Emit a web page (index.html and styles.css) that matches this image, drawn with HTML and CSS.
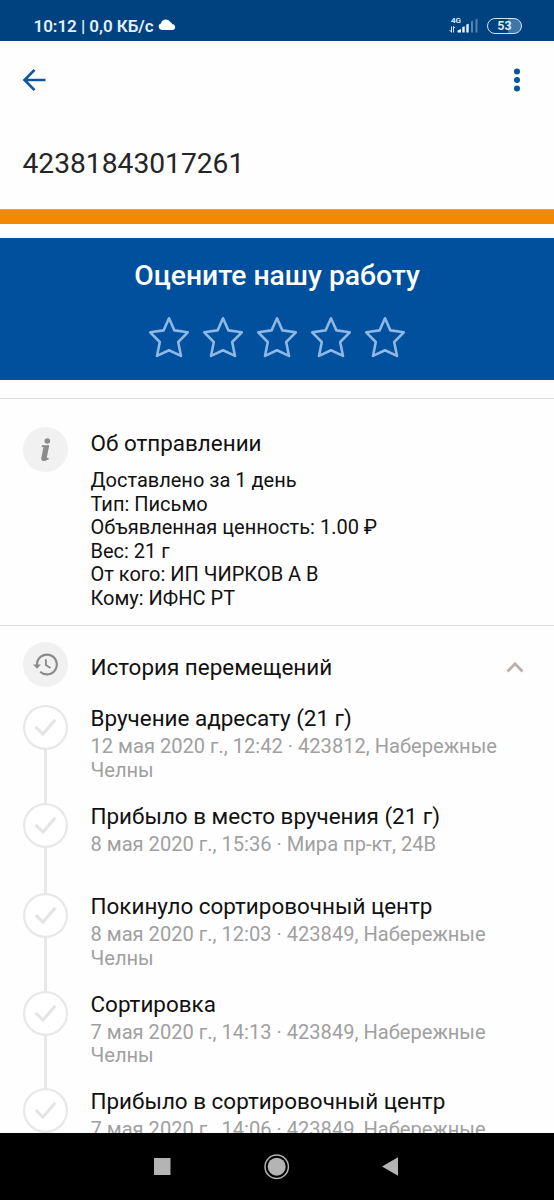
FILE: index.html
```html
<!DOCTYPE html>
<html lang="ru">
<head>
<meta charset="utf-8">
<title>42381843017261</title>
<link rel="stylesheet" href="styles.css">
</head>
<body>
<svg class="defs" width="0" height="0">
  <symbol id="star" viewBox="0 0 42 42"><path d="M21 2.300 26.400 14.400 39.800 16.300 30.200 26 33 39.900 21 34.300 9 39.900 11.800 26 2.200 16.300 15.600 14.400Z" fill="none" stroke="#8db7e4" stroke-width="2.600" stroke-linejoin="round"/></symbol>
  <symbol id="check" viewBox="0 0 45 45"><circle cx="22.5" cy="22.5" r="21.4" fill="#fff" stroke="#e8e8e8" stroke-width="2.2"/><path d="M12.500 21.800 20 29 32.300 14.800" fill="none" stroke="#e4e4e4" stroke-width="3"/></symbol>
</svg>
<div class="screen">
  <header class="status">
    <span class="status-text">10:12 | 0,0 КБ/с</span>
    <svg class="cloud" width="18" height="12" viewBox="0 0 18 12"><path d="M3.700 11A3.400 3.400 0 0 1 3 4.400 5 5 0 0 1 12.300 3.100 4 4 0 0 1 14.200 5.100 3 3 0 0 1 14.900 11Z" fill="#fff"/></svg>
    <div class="network">
      <span class="net-type">4G</span>
      <svg width="30" height="17" viewBox="0 0 30 17"><g fill="none" stroke="#d5e4f4" stroke-width="1"><path d="M2.500 9.500v6M.5 13l2 2M4.500 15.500V9.500l1.500 1.500"/></g><g fill="#e8f2fc"><path d="M8.500 15.500v-2l3.500-1.500v3.500zM13.300 15.500V10l2.400-.8v6.300zM17.300 15.500V7.500l2.400-.8v8.800z"/></g><path d="M22 15.500V4.500l2-1v12zM26.500 15.500V2.500l2-1v14z" fill="#5283b2"/></svg>
    </div>
    <span class="battery">53</span>
  </header>

  <nav class="appbar">
    <svg width="24" height="24" viewBox="0 0 24 24"><path d="M12.500 1.800 2.500 12 12.500 22.200M2.500 12H23.500" fill="none" stroke="#0c559e" stroke-width="2.600"/></svg>
    <svg width="8" height="24" viewBox="0 0 8 24" fill="#07549f"><circle cx="4" cy="3.500" r="3"/><circle cx="4" cy="12" r="3"/><circle cx="4" cy="20.500" r="3"/></svg>
  </nav>
  <h1 class="number">42381843017261</h1>
  <div class="stripe"></div>

  <section class="rate">
    <h2 class="rate-title">Оцените нашу работу</h2>
    <div class="stars">
      <svg><use href="#star"/></svg><svg><use href="#star"/></svg><svg><use href="#star"/></svg><svg><use href="#star"/></svg><svg><use href="#star"/></svg>
    </div>
  </section>

  <section class="about">
    <svg class="badge" viewBox="0 0 45 45"><circle cx="22.500" cy="22.500" r="22.500" fill="#f1f1f1"/><circle cx="24.300" cy="14" r="2.800" fill="#8c8c8c"/><path d="M18.800 18.300H26.300L23.900 30Q23.700 31.600 25.800 30.800L25.500 32.400Q17.600 36.200 18.300 30.800L20.500 20.300 18.500 20Z" fill="#8c8c8c"/></svg>
    <div>
      <h3 class="title">Об отправлении</h3>
      <p class="details">Доставлено за 1 день<br>Тип: Письмо<br>Объявленная ценность: 1.00 ₽<br>Вес: 21 г<br>От кого: ИП ЧИРКОВ А В<br>Кому: ИФНС РТ</p>
    </div>
  </section>

  <section class="history">
    <div class="history-head">
      <svg class="badge" viewBox="0 0 45 45"><circle cx="22.500" cy="22.500" r="22.500" fill="#f1f1f1"/><path d="M14 23.500V22.500A9.900 9.900 0 1 1 17.200 29.800" fill="none" stroke="#8b8b8b" stroke-width="2.200"/><path d="M10 22.500H18L14 26.700Z" fill="#8b8b8b"/><path d="M22.900 17.300V23L27.600 26" fill="none" stroke="#8b8b8b" stroke-width="1.900"/></svg>
      <h3 class="title">История перемещений</h3>
      <svg class="chevron" width="18" height="12" viewBox="0 0 18 12"><path d="M1.500 10.500 9 2.800 16.500 10.500" fill="none" stroke="#b9b1a8" stroke-width="2.800"/></svg>
    </div>
    <ol class="events">
      <li class="event"><svg class="mark"><use href="#check"/></svg><div><h3 class="title">Вручение адресату (21 г)</h3><p class="meta">12 мая 2020 г., 12:42 · 423812, Набережные<br>Челны</p></div></li>
      <li class="event short"><svg class="mark"><use href="#check"/></svg><div><h3 class="title">Прибыло в место вручения (21 г)</h3><p class="meta">8 мая 2020 г., 15:36 · Мира пр-кт, 24В</p></div></li>
      <li class="event"><svg class="mark"><use href="#check"/></svg><div><h3 class="title">Покинуло сортировочный центр</h3><p class="meta">8 мая 2020 г., 12:03 · 423849, Набережные<br>Челны</p></div></li>
      <li class="event"><svg class="mark"><use href="#check"/></svg><div><h3 class="title">Сортировка</h3><p class="meta">7 мая 2020 г., 14:13 · 423849, Набережные<br>Челны</p></div></li>
      <li class="event"><svg class="mark"><use href="#check"/></svg><div><h3 class="title">Прибыло в сортировочный центр</h3><p class="meta">7 мая 2020 г., 14:06 · 423849, Набережные</p></div></li>
    </ol>
  </section>

  <footer class="navbar">
    <svg width="554" height="67" viewBox="0 0 554 67" fill="#b4b4b4"><path d="M154 25h16.500v17H154z"/><circle cx="276.700" cy="33.700" r="9"/><circle cx="276.700" cy="33.700" r="11.700" fill="none" stroke="#b4b4b4" stroke-width="1.500"/><path d="M398 24.300v18.400L382 33.500z"/></svg>
  </footer>
</div>
</body>
</html>
```
FILE: styles.css
```css
* { box-sizing: border-box; margin: 0; padding: 0; }
body { background: #fefefe; font-family: Roboto, "Noto Sans", sans-serif; color: #111; }
svg { display: block; flex: none; }
h1, h2, h3 { font-weight: 400; }
.defs { position: absolute; }
.screen { width: 554px; height: 1200px; overflow: hidden; display: flex; flex-direction: column; }
.screen > * { flex: none; }

.status { height: 41px; background: #00427f; color: #e2effb; display: flex; align-items: center; padding: 10px 32px 0 33.5px; }
.status-text { font-size: 17px; line-height: 20px; font-weight: 600; letter-spacing: -0.05px; white-space: nowrap; }
.cloud { margin: -2px 0 0 4px; }
.network { margin-left: auto; position: relative; }
.net-type { position: absolute; left: 2px; top: -1px; font-size: 8px; line-height: 9px; font-weight: 600; }
.battery { width: 35px; height: 16px; margin-left: 8px; border: 1.5px solid #cfe3f6; border-radius: 8px; background: linear-gradient(90deg, #00427f 62%, #3f76aa 62%); font-size: 12.5px; line-height: 14px; font-weight: 600; text-align: center; }

.appbar { height: 79px; display: flex; align-items: center; justify-content: space-between; padding: 0 33px 0 22px; }
.appbar svg { margin-top: -1px; }
.number { height: 89px; padding: 27px 23px 0 22.5px; font-size: 28.2px; line-height: 33px; color: #252525; }
.stripe { height: 15px; background: #f38900; border-top: 1px solid #c9a878; }

.rate { height: 142px; margin-top: 14px; background: #00509d; color: #fff; text-align: center; padding-top: 21px; }
.rate-title { font-size: 28.3px; line-height: 33px; font-weight: 500; }
.stars { display: flex; justify-content: center; gap: 12px; margin-top: 24px; }
.stars svg { width: 42px; height: 42px; }

.badge { width: 45px; height: 45px; }
.title { font-size: 22.45px; line-height: 27px; white-space: nowrap; }
.about { height: 228px; margin-top: 18px; border-top: 1px solid #e2e2e2; border-bottom: 1px solid #e2e2e2; display: flex; gap: 23px; padding: 28px 22.5px 0; }
.about .title { margin-top: 3px; }
.details { font-size: 20px; line-height: 23.6px; margin-top: 12px; white-space: nowrap; }

.history { height: 507px; overflow: hidden; padding: 16px 22.5px 0; }
.history-head { display: flex; align-items: center; gap: 23px; }
.history-head .title { margin-top: 5px; }
.chevron { margin: 5px 8px 0 auto; }
.events { list-style: none; margin-top: 18px; }
.event { height: 97.5px; display: flex; gap: 23px; background: linear-gradient(#e8e8e8, #e8e8e8) 21px 0 / 3px 100% no-repeat; }
.event.short { height: 90.5px; }
.mark { width: 45px; height: 45px; }
.meta { font-size: 20.1px; line-height: 23.6px; color: #a0a0a0; margin-top: 3px; white-space: nowrap; }

.navbar { height: 67px; margin-top: auto; background: #000; }
```
